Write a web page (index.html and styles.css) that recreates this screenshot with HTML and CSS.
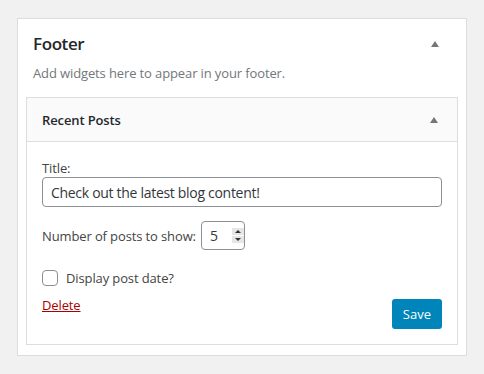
FILE: index.html
```html
<!DOCTYPE html>
<html lang="en">
<head>
    <meta charset="UTF-8">
    <title>Widgets - Footer</title>
    <link rel="stylesheet" href="styles.css">
</head>
<body>
    <div class="sidebar">
        <div class="sidebar-head">
            <h2>Footer</h2>
            <span class="toggle"></span>
        </div>
        <p class="sidebar-desc">Add widgets here to appear in your footer.</p>

        <div class="widget">
            <div class="widget-top">
                <h3>Recent Posts</h3>
                <span class="toggle"></span>
            </div>
            <div class="widget-inside">
                <label class="field-label" for="title">Title:</label>
                <input class="text-input" id="title" type="text" value="Check out the latest blog content!">

                <div class="number-row">
                    <label for="number">Number of posts to show:</label>
                    <div class="number-box">
                        <input id="number" type="text" value="5">
                        <div class="spinner">
                            <span class="up"></span>
                            <span class="down"></span>
                        </div>
                    </div>
                </div>

                <label class="check-row">
                    <span class="checkbox"></span>
                    Display post date?
                </label>

                <div class="widget-actions">
                    <a href="#" class="delete">Delete</a>
                    <button class="save">Save</button>
                </div>
            </div>
        </div>
    </div>
</body>
</html>
```

FILE: styles.css
```css
body {
    margin: 0;
    padding: 18px 17px 19px;
    background-color: #f1f1f1;
    font-family: 'Open Sans', sans-serif;
    font-size: 13px;
    letter-spacing: -0.12px;
    color: #444;
}
.sidebar {
    background: #fff;
    border: 1px solid #ddd;
    padding: 0 8px 10px;
}
.sidebar-head {
    display: flex;
    align-items: center;
    justify-content: space-between;
    padding: 13px 19px 0 7px;
}
.sidebar-head h2 {
    margin: 0;
    font-size: 17px;
    font-weight: 600;
    letter-spacing: -0.4px;
    color: #23282d;
    line-height: 24px;
}
.toggle {
    width: 0;
    height: 0;
    border-left: 4px solid transparent;
    border-right: 4px solid transparent;
    border-bottom: 6px solid #72777c;
}
.sidebar-desc {
    margin: 7px 7px 14px;
    color: #72777c;
    line-height: 20px;
}
.widget {
    border: 1px solid #ddd;
}
.widget-top {
    display: flex;
    align-items: center;
    justify-content: space-between;
    height: 43px;
    padding: 0 19px 0 15px;
    background: #fafafa;
    border-bottom: 1px solid #ddd;
}
.widget-top h3 {
    margin: 0;
    font-size: 13px;
    font-weight: 600;
    color: #23282d;
}
.widget-inside {
    padding: 17px 15px 15px;
}
.field-label {
    display: block;
    line-height: 18px;
}
.text-input {
    display: block;
    box-sizing: border-box;
    width: 100%;
    height: 30px;
    padding: 0 8px;
    border: 1px solid #8c8f94;
    border-radius: 4px;
    font-family: inherit;
    font-size: 14px;
    letter-spacing: -0.3px;
    color: #32373c;
}
.number-row {
    display: flex;
    align-items: center;
    gap: 5px;
    margin-top: 14px;
}
.number-box {
    display: flex;
    align-items: center;
    box-sizing: border-box;
    width: 44px;
    height: 29px;
    border: 1px solid #8c8f94;
    border-radius: 4px;
}
.number-box input {
    width: 20px;
    border: none;
    padding: 0 0 0 8px;
    font-family: inherit;
    font-size: 14px;
    color: #32373c;
    outline: none;
}
.spinner {
    display: flex;
    flex-direction: column;
    gap: 1px;
    width: 13px;
    margin-left: 2px;
}
.spinner span {
    display: flex;
    align-items: center;
    justify-content: center;
    height: 7px;
    background: #e6e6e6;
}
.spinner span::after {
    content: "";
    border-left: 3px solid transparent;
    border-right: 3px solid transparent;
}
.spinner .up::after {
    border-bottom: 3px solid #333;
}
.spinner .down::after {
    border-top: 3px solid #333;
}
.check-row {
    display: flex;
    align-items: center;
    gap: 8px;
    margin-top: 19px;
    line-height: 18px;
}
.checkbox {
    box-sizing: border-box;
    width: 16px;
    height: 16px;
    border: 1px solid #8c8f94;
    border-radius: 4px;
}
.widget-actions {
    display: flex;
    justify-content: space-between;
    align-items: flex-start;
    margin-top: 8px;
}
.delete {
    color: #a00;
    margin-top: 1px;
    line-height: 18px;
}
.save {
    margin-top: 4px;
    height: 30px;
    padding: 0 11px;
    background: #0085ba;
    border: none;
    border-radius: 3px;
    color: #fff;
    font-family: inherit;
    font-size: 13px;
}
```
